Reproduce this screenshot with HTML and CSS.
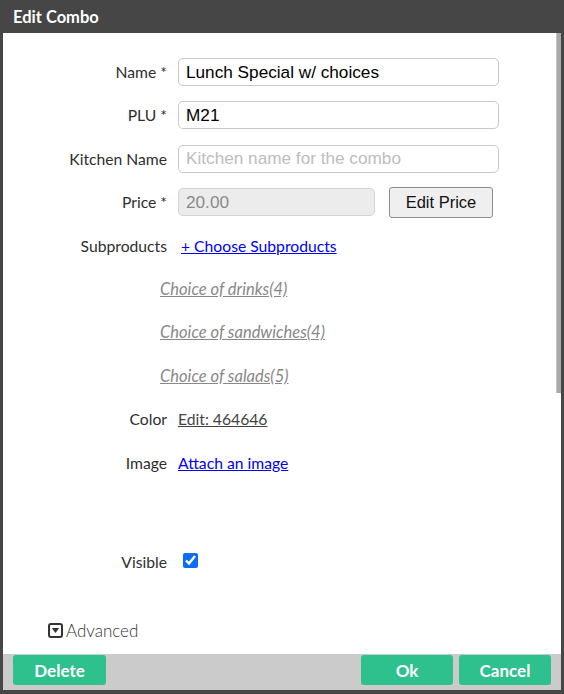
FILE: index.html
```html
<!DOCTYPE html>
<html>
<head>
<meta charset="utf-8">
<link rel="stylesheet" href="styles.css">
</head>
<body>
<div class="dialog">
  <header class="titlebar">Edit Combo</header>
  <div class="body">
    <form class="form">
      <label class="lbl">Name *</label>
      <div class="field"><input class="input" type="text" value="Lunch Special w/ choices"></div>

      <label class="lbl">PLU *</label>
      <div class="field"><input class="input" type="text" value="M21"></div>

      <label class="lbl">Kitchen Name</label>
      <div class="field"><input class="input" type="text" placeholder="Kitchen name for the combo"></div>

      <label class="lbl">Price *</label>
      <div class="field price-field">
        <input class="input input-price" type="text" value="20.00" disabled>
        <button type="button" class="btn-edit">Edit Price</button>
      </div>

      <label class="lbl">Subproducts</label>
      <div class="field"><a class="link link-blue link-choose" href="#">+ Choose Subproducts</a></div>

      <div class="choice"><a class="link-choice" href="#">Choice of drinks(4)</a></div>
      <div class="choice"><a class="link-choice" href="#">Choice of sandwiches(4)</a></div>
      <div class="choice"><a class="link-choice" href="#">Choice of salads(5)</a></div>

      <label class="lbl">Color</label>
      <div class="field"><a class="link link-dark" href="#">Edit: 464646</a></div>

      <label class="lbl">Image</label>
      <div class="field"><a class="link link-blue" href="#">Attach an image</a></div>
    </form>
    <div class="form visible-row">
      <label class="lbl">Visible</label>
      <div class="field"><input class="check" type="checkbox" checked></div>
    </div>
    <div class="advanced">
      <svg class="adv-icon" width="15" height="15" viewBox="0 0 15 15">
        <rect x="1" y="1" width="13" height="13" rx="2" fill="#fff" stroke="#333" stroke-width="2"/>
        <polygon points="3.8,5 11.2,5 7.5,10" fill="#333"/>
      </svg>
      <span class="adv-text">Advanced</span>
    </div>
    <div class="scroll-thumb"></div>
  </div>
  <footer class="footer">
    <button type="button" class="btn-green btn-delete">Delete</button>
    <div class="footer-right">
      <button type="button" class="btn-green">Ok</button>
      <button type="button" class="btn-green">Cancel</button>
    </div>
  </footer>
</div>
</body>
</html>
```

FILE: styles.css
```css
* { box-sizing: border-box; }

html, body {
  margin: 0;
  padding: 0;
  height: 100%;
  background: #464646;
}

.dialog {
  height: 694px;
  display: flex;
  flex-direction: column;
  border-left: 3px solid #464646;
  border-right: 3px solid #464646;
  border-bottom: 4px solid #464646;
  font-family: Lato, "Liberation Sans", sans-serif;
}

.titlebar {
  height: 33px;
  flex: none;
  background: #464646;
  color: #fff;
  font-weight: 700;
  font-size: 16.5px;
  line-height: 34px;
  padding-left: 10px;
}

.body {
  flex: 1;
  position: relative;
  background: #fff;
  overflow: hidden;
}

.scroll-thumb {
  position: absolute;
  top: 0;
  right: 0;
  width: 5px;
  height: 360px;
  background: #a9a9a9;
  border-left: 1px solid #c4c4c4;
}

.form {
  display: grid;
  grid-template-columns: 164px 1fr;
  grid-auto-rows: 28px;
  column-gap: 11px;
  row-gap: 15.4px;
  padding-top: 25px;
  align-items: center;
}

.visible-row {
  padding-top: 71px;
}

.lbl {
  text-align: right;
  font-size: 15.7px;
  color: #2e2e2e;
  white-space: nowrap;
}

.field {
  display: flex;
  align-items: center;
}

.input {
  width: 321px;
  height: 28px;
  border: 1px solid #c9c9c9;
  border-radius: 5px;
  padding: 0 7px;
  font-family: "Liberation Sans", Arial, sans-serif;
  font-size: 17.2px;
  color: #000;
  background: #fff;
  outline: none;
}

.input::placeholder {
  color: #bdbdbd;
}

.input-price {
  width: 197px;
  background: #ececec;
  color: #8a8a8a;
  border-color: #d3d3d3;
}

.btn-edit {
  margin-left: 14px;
  width: 104px;
  height: 31px;
  border: 1px solid #8d8d8d;
  border-radius: 3px;
  background: #efefef;
  font-family: "Liberation Sans", Arial, sans-serif;
  font-size: 16.5px;
  color: #111;
  padding: 0;
}

.link {
  font-size: 15.7px;
  text-decoration: underline;
}
.link-blue { color: #0000ee; }
.link-dark { color: #444; }
.link-choose { margin-left: 3px; }

.choice {
  grid-column: 1 / -1;
  padding-left: 157px;
}

.link-choice {
  font-size: 16.5px;
  font-style: italic;
  color: #888;
  text-decoration: underline;
}

.check {
  margin: 0 0 2px 5px;
  width: 15px;
  height: 15px;
  accent-color: #0b6df5;
}

.advanced {
  display: flex;
  align-items: center;
  padding: 44px 0 0 45px;
  color: #333;
}

.adv-icon {
  display: block;
  margin-right: 3px;
}

.adv-text {
  font-size: 17px;
  font-weight: 300;
}

.footer {
  flex: none;
  height: 36px;
  background: #cbcbcb;
  display: flex;
  justify-content: space-between;
  align-items: flex-start;
  padding: 1px 10px 0 10px;
}

.footer-right {
  display: flex;
  gap: 6px;
}

.btn-green {
  width: 92px;
  height: 30px;
  border: none;
  border-radius: 3px;
  background: #2ec08d;
  color: #fff;
  font-family: Lato, "Liberation Sans", sans-serif;
  font-weight: 700;
  font-size: 17px;
  padding: 0;
}

.btn-delete {
  width: 93px;
}
```
